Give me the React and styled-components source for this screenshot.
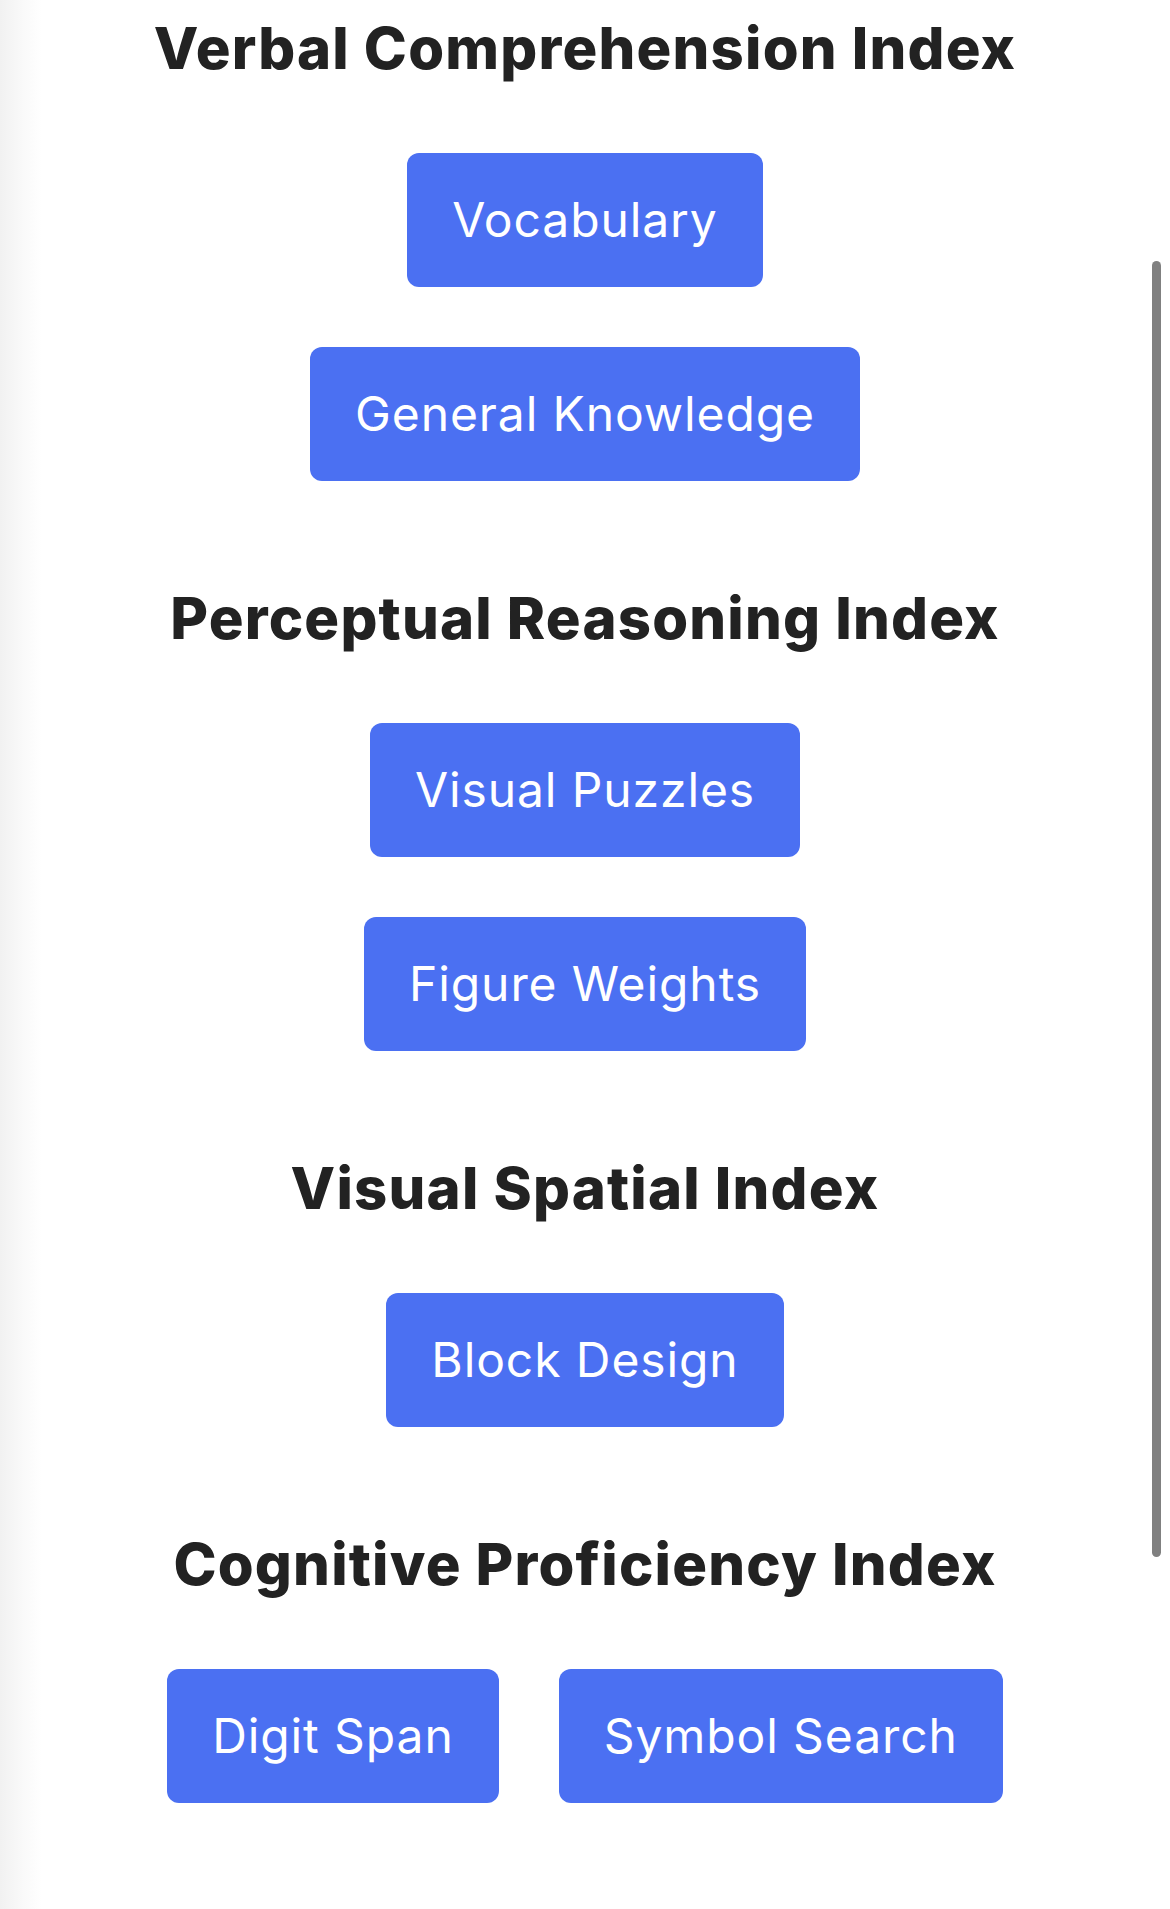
import styled, { createGlobalStyle } from "styled-components";

const GlobalStyle = createGlobalStyle`
  * {
    box-sizing: border-box;
  }

  body {
    margin: 0;
    min-height: 100vh;
    background: linear-gradient(90deg, #f1f1f1 0px, #fafafa 24px, #ffffff 42px);
    font-family: Inter, "Noto Sans", sans-serif;
  }
`;

const Page = styled.main`
  display: flex;
  flex-direction: column;
  align-items: center;
  gap: 65px;
  padding: 6px 0 60px;
`;

const Section = styled.section`
  display: flex;
  flex-direction: column;
  align-items: center;
`;

const Heading = styled.h2`
  margin: 0 0 33px;
  font-size: 58px;
  line-height: 84px;
  font-weight: 800;
  color: #222222;
  letter-spacing: 1.2px;
  text-align: center;
`;

const Row = styled.div`
  display: flex;
  justify-content: center;
`;

const TestButton = styled.button`
  margin: 30px;
  padding: 30px 45px;
  border: none;
  border-radius: 12px;
  background-color: #4b70f2;
  color: #ffffff;
  font-family: inherit;
  font-size: 48px;
  line-height: 74px;
  font-weight: 400;
  letter-spacing: 0.9px;
  white-space: nowrap;
  cursor: pointer;

  &:hover {
    background-color: #3f63e0;
  }
`;

const ScrollThumb = styled.div`
  position: fixed;
  top: 261px;
  right: 9px;
  width: 9px;
  height: 1296px;
  border-radius: 5px;
  background: #808080;
`;

const indexes = [
  {
    title: "Verbal Comprehension Index",
    rows: [["Vocabulary"], ["General Knowledge"]],
  },
  {
    title: "Perceptual Reasoning Index",
    rows: [["Visual Puzzles"], ["Figure Weights"]],
  },
  {
    title: "Visual Spatial Index",
    rows: [["Block Design"]],
  },
  {
    title: "Cognitive Proficiency Index",
    rows: [["Digit Span", "Symbol Search"]],
  },
];

export default function App() {
  return (
    <>
      <GlobalStyle />
      <Page>
        {indexes.map((index) => (
          <Section key={index.title}>
            <Heading>{index.title}</Heading>
            <div>
              {index.rows.map((row) => (
                <Row key={row.join("-")}>
                  {row.map((test) => (
                    <TestButton key={test}>{test}</TestButton>
                  ))}
                </Row>
              ))}
            </div>
          </Section>
        ))}
      </Page>
      <ScrollThumb />
    </>
  );
}
